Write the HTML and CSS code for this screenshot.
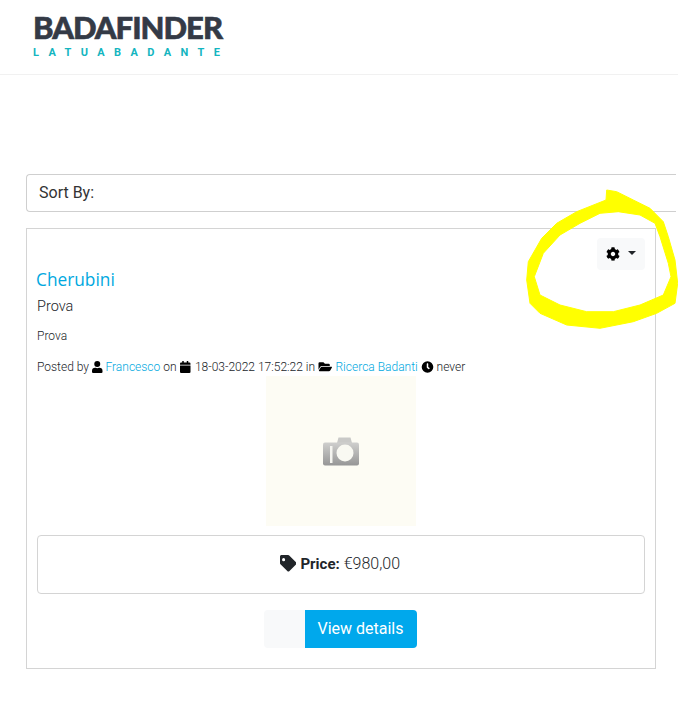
FILE: index.html
```html
<!DOCTYPE html>
<html>
<head>
<meta charset="utf-8">
<title>Badafinder</title>
<link rel="stylesheet" href="styles.css">
</head>
<body>
    <header class="site-header">
        <a class="logo">
            <span class="logo-name">BADAFINDER</span>
            <span class="logo-tag">LATUABADANTE</span>
        </a>
    </header>

    <main class="content">
        <div class="sort-box">Sort By:</div>

        <article class="listing">
            <div class="listing-tools">
                <button type="button" class="tools-button">
                    <svg class="icon-gear" viewBox="0 0 512 512"><path d="M487.4 315.7l-42.6-24.6c4.3-23.2 4.3-47 0-70.2l42.6-24.6c4.9-2.8 7.1-8.6 5.5-14-11.1-35.6-30-67.8-54.7-94.6-3.8-4.1-10-5.1-14.8-2.3L380.8 110c-17.9-15.4-38.5-27.3-60.8-35.1V25.8c0-5.6-3.9-10.5-9.4-11.7-36.7-8.2-74.3-7.8-109.2 0-5.5 1.2-9.4 6.1-9.4 11.7V75c-22.2 7.9-42.8 19.8-60.8 35.1L88.7 85.5c-4.9-2.8-11-1.9-14.8 2.3-24.7 26.7-43.6 58.9-54.7 94.6-1.7 5.4.6 11.2 5.5 14L67.3 221c-4.3 23.2-4.3 47 0 70.2l-42.6 24.6c-4.9 2.8-7.1 8.6-5.5 14 11.1 35.6 30 67.8 54.7 94.6 3.8 4.1 10 5.1 14.8 2.3l42.6-24.6c17.9 15.4 38.5 27.3 60.8 35.1v49.2c0 5.6 3.9 10.5 9.4 11.7 36.7 8.2 74.3 7.8 109.2 0 5.5-1.2 9.4-6.1 9.4-11.7v-49.2c22.2-7.9 42.8-19.8 60.8-35.1l42.6 24.6c4.9 2.8 11 1.9 14.8-2.3 24.7-26.7 43.6-58.9 54.7-94.6 1.5-5.5-.7-11.3-5.6-14.1zM256 336c-44.1 0-80-35.9-80-80s35.9-80 80-80 80 35.9 80 80-35.9 80-80 80z"/></svg>
                    <span class="caret"></span>
                </button>
            </div>
            <h2 class="listing-title"><a>Cherubini</a></h2>
            <h3 class="listing-sub">Prova</h3>
            <p class="listing-text">Prova</p>
            <p class="listing-meta">
                Posted by
                <svg class="icon icon-user" viewBox="0 0 448 512"><path d="M224 256a128 128 0 1 0 0-256 128 128 0 0 0 0 256zm90 32h-17a174 174 0 0 1-146 0h-17A134 134 0 0 0 0 422v42a48 48 0 0 0 48 48h352a48 48 0 0 0 48-48v-42a134 134 0 0 0-134-134z"/></svg>
                <a>Francesco</a>
                on
                <svg class="icon icon-calendar" viewBox="0 0 448 512"><path d="M12 192h424c7 0 12 5 12 12v260a48 48 0 0 1-48 48H48a48 48 0 0 1-48-48V204c0-7 5-12 12-12zm436-44v-36a48 48 0 0 0-48-48h-48V12c0-7-5-12-12-12h-40c-7 0-12 5-12 12v52H160V12c0-7-5-12-12-12h-40c-7 0-12 5-12 12v52H48a48 48 0 0 0-48 48v36c0 7 5 12 12 12h424c7 0 12-5 12-12z"/></svg>
                18-03-2022 17:52:22 in
                <svg class="icon icon-wide" viewBox="0 0 576 512"><path d="M573 279l-72 124a64 64 0 0 1-55 32H40c-19 0-30-20-21-36l72-124a64 64 0 0 1 55-32h406c19 0 30 20 21 36zM146 208h336v-48a48 48 0 0 0-48-48H274l-64-64H48a48 48 0 0 0-48 48v278l69-119a112 112 0 0 1 77-47z"/></svg>
                <a>Ricerca Badanti</a>
                <svg class="icon icon-round" viewBox="0 0 512 512"><path d="M256 8a248 248 0 1 0 0 496 248 248 0 0 0 0-496zm92 313l-20 25a16 16 0 0 1-22 3l-67-50a40 40 0 0 1-15-31V112a16 16 0 0 1 16-16h32a16 16 0 0 1 16 16v144l58 43a16 16 0 0 1 2 22z"/></svg>
                never
            </p>

            <div class="listing-photo">
                <svg class="icon-camera" viewBox="0 0 36 29">
                    <defs>
                        <linearGradient id="camGrad" x1="0" y1="0" x2="0" y2="1">
                            <stop offset="0" stop-color="#cfcfcd"/>
                            <stop offset="1" stop-color="#969696"/>
                        </linearGradient>
                    </defs>
                    <path fill="#c9c9c7" d="M14 6l1.500-5.500h12L29 6z"/>
                    <rect y="5.500" width="36" height="23" rx="2" fill="url(#camGrad)"/>
                    <rect x="7" y="9" width="2.500" height="17" fill="#f5f5f0"/>
                    <circle cx="22" cy="16" r="8.500" fill="#f9f9f2"/>
                </svg>
            </div>

            <div class="price-box">
                <svg class="icon-tag" viewBox="0 0 512 512"><path d="M0 252V48C0 21 21 0 48 0h204a48 48 0 0 1 34 14l212 212a48 48 0 0 1 0 68L294 498a48 48 0 0 1-68 0L14 286a48 48 0 0 1-14-34zm112-156a48 48 0 1 0 0 96 48 48 0 0 0 0-96z"/></svg>
                <strong>Price:</strong> €980,00
            </div>

            <div class="listing-actions">
                <span class="action-blank"></span>
                <a class="action-view">View details</a>
            </div>
        </article>
    </main>

    <svg class="scribble" viewBox="0 0 678 728">
        <path fill-rule="evenodd" d="M606.700 190L616.700 191.700L633.300 200L650 208.300L663.300 221.700L668.300 236.700L675 260L677.700 283.300L675 303.300L656.700 313.300L633.300 321.700L600 328.300L566.700 325L540 313.300L530 303.300L526.700 280L528.300 261.700L541.700 238.300L556.700 223.300L576.700 211.700L606 200ZM618.300 211.700L600 213.300L580 223.300L560 235L543.300 253.300L534.300 276.700L540 295L560 305L586.700 311.700L613.300 311.700L640 305L663.300 295L671 276.700L668.300 263.300L660 236.700L655 223.300L640 215Z"/>
    </svg>
</body>
</html>
```

FILE: styles.css
```css
:root {
    --link-color: #00a8e0;
    --text-color: #212529;
    --line-color: #d4d4d4;
}

html, body {
    overflow: hidden;
}

body {
    margin: 0;
    height: 728px;
    font-family: Roboto, 'Liberation Sans', sans-serif;
    color: var(--text-color);
    background-color: #fff;
    position: relative;
}

.site-header {
    height: 74px;
    border-bottom: 1px solid #f1f1f1;
    padding-left: 33px;
}

.logo {
    display: inline-flex;
    flex-direction: column;
    padding-top: 12px;
}

.logo-name {
    font-family: Lato, sans-serif;
    font-weight: 900;
    font-size: 31px;
    line-height: 30px;
    letter-spacing: -1px;
    -webkit-text-stroke: 0.6px #343a46;
    color: #343a46;
    white-space: nowrap;
}

.logo-tag {
    font-family: Roboto, sans-serif;
    font-weight: 700;
    font-size: 11px;
    line-height: 12px;
    letter-spacing: 9.400px;
    color: #13b5c0;
    margin-top: 5px;
    white-space: nowrap;
    width: 190px;
}

.content {
    padding: 99px 0 0 26px;
}

.sort-box {
    width: 650px;
    height: 38px;
    box-sizing: border-box;
    border: 1px solid #cfcfcf;
    border-right: none;
    border-radius: 4px 0 0 4px;
    padding-left: 12px;
    font-size: 16px;
    line-height: 35px;
    color: #333;
}

.listing {
    width: 630px;
    height: 441px;
    box-sizing: border-box;
    margin-top: 16px;
    padding: 9px 10px;
    border: 1px solid var(--line-color);
}

.listing-tools {
    display: flex;
    justify-content: flex-end;
    height: 32px;
}

.tools-button {
    width: 48px;
    height: 32px;
    padding: 0;
    display: flex;
    align-items: center;
    justify-content: center;
    gap: 8px;
    border: none;
    border-radius: 4px;
    background-color: #f8f9fa;
}

.icon-gear {
    width: 14px;
    height: 14px;
}

.caret {
    border-top: 4px solid #212529;
    border-left: 4px solid transparent;
    border-right: 4px solid transparent;
    margin-top: -2px;
}

.listing-title {
    margin: -1px 0 0 -1px;
    font-family: 'Open Sans', sans-serif;
    font-size: 17.300px;
    font-weight: 400;
    line-height: 22px;
}

.listing-title a,
.listing-meta a {
    color: var(--link-color);
}

.listing-sub {
    margin: 5px 0 0;
    font-size: 14.500px;
    font-weight: 300;
    line-height: 22px;
}

.listing-text {
    margin: 7px 0 0;
    font-size: 12px;
    font-weight: 300;
    line-height: 22px;
}

.listing-meta {
    margin: 9px 0 0;
    font-size: 12px;
    font-weight: 300;
    line-height: 22px;
    white-space: nowrap;
}

.icon {
    width: 11.500px;
    height: 12px;
    vertical-align: -2px;
}

.icon-user {
    width: 10.500px;
}

.icon-calendar {
    width: 12.500px;
}

.icon-wide {
    width: 14.500px;
}

.icon-round {
    width: 13px;
}

.listing-photo {
    width: 150px;
    height: 150px;
    margin: -2px auto 0;
    display: flex;
    align-items: center;
    justify-content: center;
    background-color: #fdfcf4;
}

.icon-camera {
    width: 36px;
    height: 29px;
}

.price-box {
    height: 59px;
    box-sizing: border-box;
    margin-top: 9px;
    padding: 0 2px 2px 0;
    border: 1px solid var(--line-color);
    border-radius: 4px;
    display: flex;
    align-items: center;
    justify-content: center;
    gap: 4px;
    font-size: 16px;
    font-weight: 300;
}

.price-box strong {
    font-size: 15px;
    font-weight: 700;
}

.icon-tag {
    width: 16.500px;
    height: 16.500px;
    fill: #212529;
}

.listing-actions {
    display: flex;
    justify-content: center;
    margin-top: 16px;
    padding-right: 2px;
}

.action-blank {
    width: 41px;
    height: 38px;
    background-color: #f8f9fa;
    border-radius: 4px 0 0 4px;
}

.action-view {
    width: 112px;
    height: 38px;
    background-color: #00a8ec;
    border-radius: 0 4px 4px 0;
    color: #fff;
    font-size: 16px;
    line-height: 38px;
    text-align: center;
}

.scribble {
    position: absolute;
    left: 0;
    top: 0;
    width: 678px;
    height: 728px;
    fill: #ffff00;
    stroke: #ffff00;
    stroke-width: 1;
    stroke-linejoin: round;
    pointer-events: none;
}
```
